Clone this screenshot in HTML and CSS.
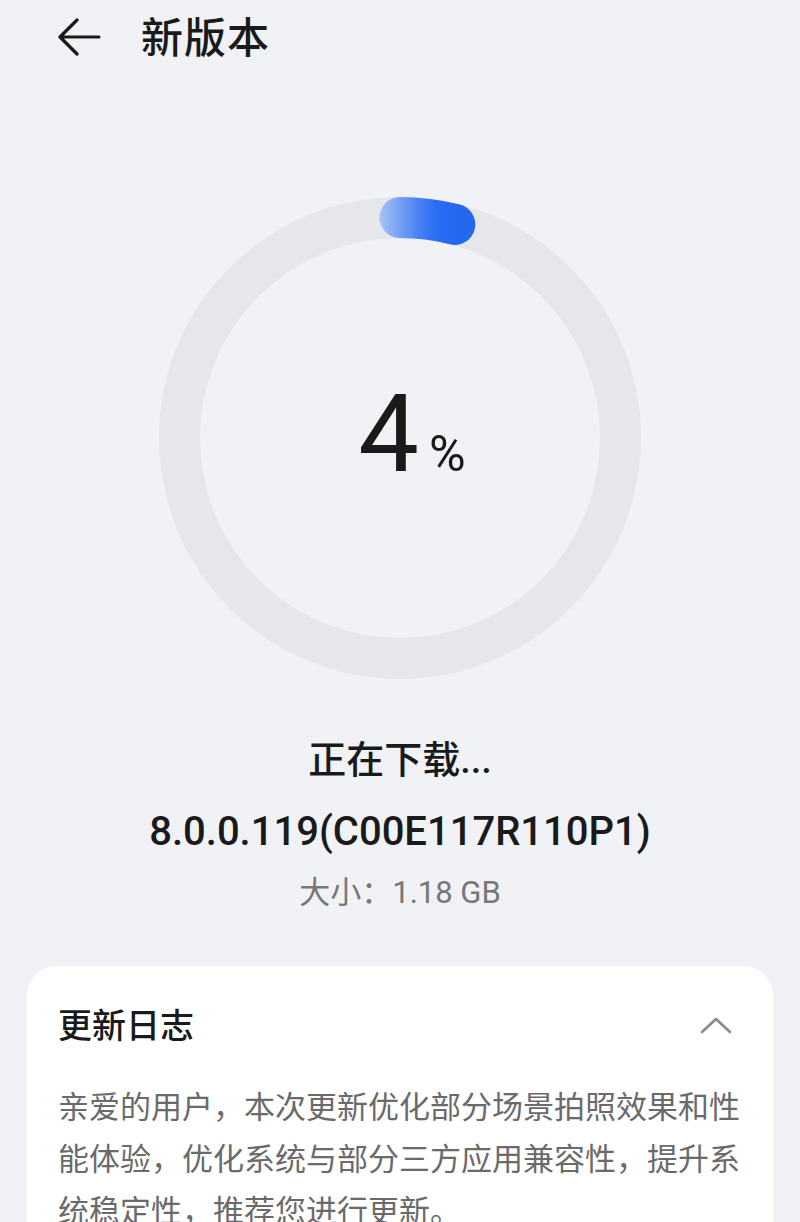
FILE: index.html
```html
<!DOCTYPE html>
<html lang="zh-CN">
<head>
    <meta charset="UTF-8">
    <meta name="viewport" content="width=device-width, initial-scale=1.0">
    <title>新版本</title>
    <link rel="stylesheet" href="styles.css">
</head>
<body>
    <header class="topbar">
        <svg class="back-icon" width="44" height="40" viewBox="0 0 44 40">
            <path d="M20 2 L3 19 L20 36 M3 19 L42 19" fill="none" stroke="#1a1a1a" stroke-width="3.2" stroke-linecap="round" stroke-linejoin="round"/>
        </svg>
        <h1 class="title">新版本</h1>
    </header>

    <section class="progress">
        <div class="ring">
            <svg class="ring-svg" width="482" height="482" viewBox="0 0 482 482">
                <defs>
                    <linearGradient id="arcGrad" gradientUnits="userSpaceOnUse" x1="222" y1="0" x2="300" y2="0">
                        <stop offset="0" stop-color="#a3c1f6"/>
                        <stop offset="0.45" stop-color="#4f86f3"/>
                        <stop offset="0.7" stop-color="#2a6cf2"/>
                        <stop offset="1" stop-color="#2468f0"/>
                    </linearGradient>
                </defs>
                <circle cx="241" cy="241" r="220.5" fill="none" stroke="#e6e7ea" stroke-width="41"/>
                <path d="M241 20.5 A220.5 220.5 0 0 1 295.8 27.4" fill="none" stroke="url(#arcGrad)" stroke-width="41" stroke-linecap="round"/>
            </svg>
            <div class="percent">
                <span class="percent-num">4</span><span class="percent-sign">%</span>
            </div>
        </div>
    </section>

    <section class="info">
        <div class="status">正在下载...</div>
        <div class="version">8.0.0.119(C00E117R110P1)</div>
        <div class="size">大小：1.18 GB</div>
    </section>

    <section class="card">
        <div class="card-head">
            <h2 class="card-title">更新日志</h2>
            <svg class="chevron" width="32" height="18" viewBox="0 0 32 18">
                <path d="M2 15 L16 2 L30 15" fill="none" stroke="#8a8a8a" stroke-width="2.6" stroke-linecap="round" stroke-linejoin="round"/>
            </svg>
        </div>
        <p class="card-text">亲爱的用户，本次更新优化部分场景拍照效果和性能体验，优化系统与部分三方应用兼容性，提升系统稳定性，推荐您进行更新。</p>
    </section>
</body>
</html>
```

FILE: styles.css
```css
body {
    margin: 0;
    padding: 0;
    background-color: #f1f2f6;
    color: #1a1a1a;
    font-family: Roboto, "Noto Sans CJK SC", sans-serif;
    overflow: hidden;
}

.topbar {
    display: flex;
    align-items: center;
    height: 78px;
    padding-left: 57px;
}

.back-icon {
    margin-top: -2px;
}

.title {
    margin: 0 0 0 40px;
    font-size: 42px;
    font-weight: 500;
    line-height: 1;
    letter-spacing: 1px;
}

.progress {
    display: flex;
    justify-content: center;
    padding-top: 119px;
}

.ring {
    display: grid;
    width: 482px;
    height: 482px;
}

.ring-svg,
.percent {
    grid-area: 1 / 1;
}

.percent {
    display: flex;
    justify-content: center;
    align-items: baseline;
    padding-top: 183px;
    padding-left: 24px;
}

.percent-num {
    font-size: 108px;
    font-weight: 400;
    line-height: 1;
}

.percent-sign {
    margin-left: 10px;
    font-size: 50px;
    line-height: 1;
}

.info {
    display: flex;
    flex-direction: column;
    align-items: center;
    padding-top: 62px;
}

.status {
    font-size: 38px;
    font-weight: 500;
    line-height: 1;
}

.version {
    margin-top: 33px;
    font-size: 40px;
    font-weight: 500;
    line-height: 1;
}

.size {
    margin-top: 25px;
    font-size: 31px;
    color: #777;
    line-height: 1;
}

.card {
    margin: 58px 27px 0;
    padding: 38px 31px 0;
    background-color: #fff;
    border-radius: 30px;
    height: 400px;
}

.card-head {
    display: flex;
    justify-content: space-between;
    align-items: center;
}

.card-title {
    margin: 0;
    font-size: 34px;
    font-weight: 500;
    line-height: 44px;
}

.chevron {
    margin-right: 10px;
}

.card-text {
    margin: 34px 0 0;
    font-size: 31px;
    line-height: 52px;
    color: #6a6a6a;
}
```
